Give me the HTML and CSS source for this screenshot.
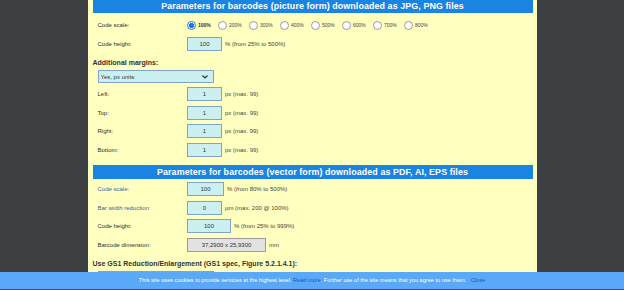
FILE: index.html
```html
<!DOCTYPE html>
<html lang="en">
<head>
    <meta charset="UTF-8">
    <title>Barcode parameters</title>
    <link rel="stylesheet" href="styles.css">
</head>
<body>
    <div class="panel">
        <h2 class="section-title">Parameters for barcodes (picture form) downloaded as JPG, PNG files</h2>

        <div class="row">
            <label class="label">Code scale:</label>
            <div class="radios">
                <label class="radio checked"><input type="radio" name="scale" checked> 100%</label>
                <label class="radio"><input type="radio" name="scale"> 200%</label>
                <label class="radio"><input type="radio" name="scale"> 300%</label>
                <label class="radio"><input type="radio" name="scale"> 400%</label>
                <label class="radio"><input type="radio" name="scale"> 500%</label>
                <label class="radio"><input type="radio" name="scale"> 600%</label>
                <label class="radio"><input type="radio" name="scale"> 700%</label>
                <label class="radio"><input type="radio" name="scale"> 800%</label>
            </div>
        </div>
        <div class="row">
            <label class="label">Code height:</label>
            <input class="field" type="text" value="100">
            <span class="hint">% (from 25% to 500%)</span>
        </div>

        <div class="group-title">Additional margins:</div>
        <div class="select-box">
            <select class="select">
                <option>Yes, px units</option>
            </select>
        </div>

        <div class="row">
            <label class="label">Left:</label>
            <input class="field" type="text" value="1">
            <span class="hint">px (max. 99)</span>
        </div>
        <div class="row">
            <label class="label">Top:</label>
            <input class="field" type="text" value="1">
            <span class="hint">px (max. 99)</span>
        </div>
        <div class="row">
            <label class="label">Right:</label>
            <input class="field" type="text" value="1">
            <span class="hint">px (max. 99)</span>
        </div>
        <div class="row">
            <label class="label">Bottom:</label>
            <input class="field" type="text" value="1">
            <span class="hint">px (max. 99)</span>
        </div>

        <h2 class="section-title second">Parameters for barcodes (vector form) downloaded as PDF, AI, EPS files</h2>

        <div class="row">
            <label class="label link">Code scale:</label>
            <input class="field wide" type="text" value="100">
            <span class="hint">% (from 80% to 500%)</span>
        </div>
        <div class="row">
            <label class="label link">Bar width reduction:</label>
            <input class="field" type="text" value="0">
            <span class="hint">µm (max. 200 @ 100%)</span>
        </div>
        <div class="row">
            <label class="label">Code height:</label>
            <input class="field wider" type="text" value="100">
            <span class="hint">% (from 25% to 999%)</span>
        </div>
        <div class="row">
            <label class="label">Barcode dimension:</label>
            <input class="field readonly" type="text" value="37,2900 x 25,9300" readonly>
            <span class="hint">mm</span>
        </div>

        <div class="group-title">Use GS1 Reduction/Enlargement (GS1 spec, Figure 5.2.1.4.1):</div>
        <div class="select-box">
            <select class="select">
                <option>No</option>
            </select>
        </div>
    </div>

    <div class="cookies">
        This site uses cookies to provide services at the highest level. <a href="#">Read more</a>. Further use of the site means that you agree to use them. <a href="#" class="close">Close</a>
    </div>
</body>
</html>
```

FILE: styles.css
```css
body {
    margin: 0;
    background: #3c4043;
    font-family: "Liberation Sans", Arial, sans-serif;
    color: #2b2b2b;
    overflow: hidden;
}

.panel {
    width: 440px;
    margin: 0 auto;
    padding: 0 4px 40px 5px;
    background: #ffffc0;
}

.section-title {
    margin: 0;
    height: 13px;
    line-height: 13px;
    background: #1a84e3;
    color: #fff;
    font-size: 8.9px;
    text-align: center;
    letter-spacing: 0.1px;
}

.section-title.second {
    margin-top: 6px;
    height: 14px;
    line-height: 14px;
}

.section-title + .row {
    margin-top: 3px;
}

.second + .row {
    margin-top: 1px;
}

.row {
    display: flex;
    align-items: center;
    height: 18.5px;
    font-size: 6px;
}

.label {
    width: 94.5px;
    padding-left: 5px;
    box-sizing: border-box;
    color: #2e2e2e;
    flex: none;
}

.label.link {
    color: #3b5fa0;
}

.field {
    width: 35px;
    height: 14px;
    box-sizing: border-box;
    margin: 0;
    padding: 0;
    border: 1px solid #7ea3cc;
    background: #ccf0f0;
    font-family: inherit;
    font-size: 6px;
    color: #333;
    text-align: center;
}

.field.wide {
    width: 37px;
}

.field.wider {
    width: 44px;
}

.field.readonly {
    width: 79px;
    background: #e2e2e2;
    border-color: #9a9a9a;
}

.hint {
    margin-left: 3px;
    color: #444;
}

.radios {
    display: flex;
    align-items: center;
    gap: 0 5px;
}

.radio {
    display: flex;
    align-items: center;
    width: 26px;
    gap: 2px;
    font-size: 5px;
    color: #444;
}

.radio.checked {
    font-weight: bold;
    color: #333;
}

.radio input {
    appearance: none;
    width: 9px;
    height: 9px;
    margin: 0;
    border: 1px solid #9a9a9a;
    border-radius: 50%;
    background: #fff;
    flex: none;
}

.radio input:checked {
    border-color: #1a73e8;
    background: radial-gradient(circle, #1a73e8 0 2.3px, #fff 2.8px);
}

.group-title {
    height: 10px;
    line-height: 10px;
    margin-top: 5px;
    font-size: 7px;
    font-weight: bold;
    color: #333;
}

.select-box {
    display: flex;
    padding: 2px 0 2px 5px;
}

.select {
    appearance: none;
    width: 116px;
    height: 13px;
    padding: 0 2px;
    border: 1px solid #7ea3cc;
    background: #ccf0f0 url("data:image/svg+xml,%3Csvg xmlns='http://www.w3.org/2000/svg' width='6' height='4' viewBox='0 0 6 4'%3E%3Cpath d='M0.5 0.5 L3 3 L5.5 0.5' fill='none' stroke='%23333' stroke-width='1.2'/%3E%3C/svg%3E") no-repeat right 5px center;
    font-family: inherit;
    font-size: 6px;
    color: #333;
}

.cookies {
    position: fixed;
    left: 0;
    right: 0;
    bottom: 0;
    height: 17px;
    line-height: 17px;
    background: #5aa8f8;
    border-bottom: 1px solid #34506e;
    color: #fff;
    font-size: 5.6px;
    text-align: center;
}

.cookies a {
    color: #1d58b0;
    text-decoration: none;
}

.cookies .close {
    margin-left: 3px;
}
```
